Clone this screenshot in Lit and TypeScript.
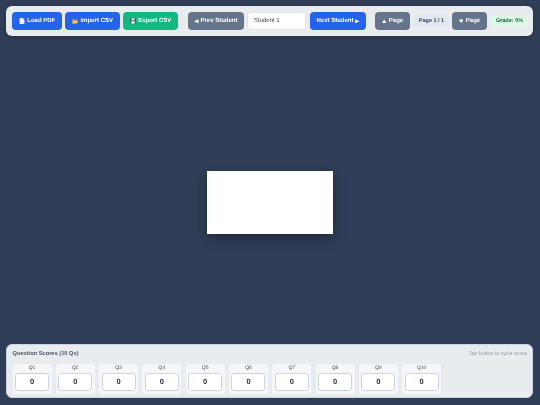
import { LitElement, html, css, svg } from "lit";
import { customElement } from "lit/decorators.js";

const pdfIcon = html`<svg class="ico" viewBox="0 0 10 10"><path d="M1 0h5l3 3v7H1z" fill="#f1f5f9"/><path d="M6 0v3h3z" fill="#cbd5e1"/></svg>`;
const folderIcon = html`<svg class="ico" viewBox="0 0 10 10"><path d="M0 1.500h3.500l1 1h4v2H0z" fill="#b98a35"/><path d="M0 9l1.500-5h8.500l-1.500 5z" fill="#f6c560"/></svg>`;
const saveIcon = html`<svg class="ico" viewBox="0 0 10 10"><path d="M.5.500h8l1 1v8h-9z" fill="#3f4a57"/><path d="M2.500.500h5v3.500h-5z" fill="#e5e7eb"/><path d="M2 5.500h6v4H2z" fill="#f8fafc"/></svg>`;
const tri = (d: string) => html`<svg class="tri" viewBox="0 0 10 10">${svg`<path d=${d} fill="#fff"/>`}</svg>`;
const LEFT = "M0 5 10 .5v9z";
const RIGHT = "M10 5 0 .5v9z";
const UP = "M5 1 10 9H0z";
const DOWN = "M5 9 10 1H0z";

@customElement("app-root")
export class AppRoot extends LitElement {
  static styles = css`
    :host {
      display: flex;
      flex-direction: column;
      width: 540px;
      height: 405px;
      box-sizing: border-box;
      padding: 6px 7px 7px 6px;
      background: #2f3e56;
      font-family: "Liberation Sans", Arial, sans-serif;
      text-rendering: geometricPrecision;
      color: #1f2937;
      overflow: hidden;
      filter: blur(0.4px);
    }
    .toolbar {
      display: flex;
      align-items: center;
      height: 30px;
      box-sizing: border-box;
      padding: 0 5px 0 6px;
      background: #e9ecef;
      border-radius: 6px;
      box-shadow: 0 1px 4px rgba(0, 0, 0, 0.25);
    }
    .btn {
      display: flex;
      align-items: center;
      justify-content: center;
      gap: 2.500px;
      height: 18px;
      box-sizing: border-box;
      border-radius: 4px;
      color: #fff;
      font-size: 6px;
      font-weight: 700;
      white-space: nowrap;
    }
    .blue { background: #2563eb; }
    .green { background: #10b981; }
    .gray { background: #64748b; }
    .w50 { width: 50px; }
    .w55 { width: 55px; margin-left: 3px; }
    .prev { width: 56px; margin-left: 10px; gap: 1.500px; }
    .next { width: 56px; margin-left: 1px; gap: 1.500px; }
    .up { width: 35px; margin-left: 9px; }
    .down { width: 35px; }
    .ico { width: 6px; height: 6px; flex: none; }
    .tri { width: 4.500px; height: 4.500px; flex: none; }
    .input {
      display: flex;
      align-items: center;
      width: 59px;
      height: 18px;
      box-sizing: border-box;
      padding-left: 6px;
      margin: 0 3px;
      background: #fff;
      border: 0.5px solid #dfe3e8;
      border-radius: 4px;
      font-size: 6px;
      color: #374151;
    }
    .page-label {
      display: flex;
      align-items: center;
      justify-content: center;
      width: 35px;
      height: 12px;
      margin: 0 3px 0 4px;
      background: #e2e8f0;
      border-radius: 3px;
      font-size: 5.500px;
      font-weight: 700;
      color: #334155;
    }
    .grade {
      display: flex;
      align-items: center;
      justify-content: center;
      width: 37px;
      height: 10px;
      margin-left: 4px;
      background: #dcfce7;
      border-radius: 3px;
      font-size: 5.500px;
      font-weight: 700;
      color: #166534;
    }
    .stage {
      flex: 1;
      display: flex;
      align-items: center;
      justify-content: center;
      padding: 25px 0 0 1px;
    }
    .sheet {
      width: 126px;
      height: 63px;
      background: #fff;
      box-shadow: 0 4px 12px rgba(0, 0, 0, 0.35);
    }
    .scores {
      height: 54px;
      box-sizing: border-box;
      padding: 5px 5px 5px 5.500px;
      background: #e9ecef;
      border: 0.5px solid #cbd5e1;
      border-radius: 6px;
    }
    .head {
      display: flex;
      justify-content: space-between;
      align-items: center;
      height: 7px;
      margin-bottom: 6.500px;
    }
    .title { font-size: 5.700px; font-weight: 700; color: #475569; }
    .hint { font-size: 5.250px; color: #8a94a6; }
    .grid { display: flex; gap: 4.300px; }
    .card {
      display: flex;
      flex-direction: column;
      align-items: center;
      width: 39px;
      height: 30px;
      box-sizing: border-box;
      padding-top: 1.500px;
      background: #f4f6f9;
      border-radius: 3px;
    }
    .q { font-size: 5px; line-height: 6px; color: #475569; }
    .val {
      display: flex;
      align-items: center;
      justify-content: center;
      width: 34px;
      height: 18.500px;
      margin-top: 1.500px;
      box-sizing: border-box;
      background: #fff;
      border: 0.75px solid #cbd5e1;
      border-radius: 2.500px;
      font-size: 7.500px;
      font-weight: 700;
      color: #1f2937;
    }
  `;

  render() {
    const qs = Array.from({ length: 10 }, (_, i) => `Q${i + 1}`);
    return html`
      <div class="toolbar">
        <div class="btn blue w50">${pdfIcon}Load PDF</div>
        <div class="btn blue w55">${folderIcon}Import CSV</div>
        <div class="btn green w55">${saveIcon}Export CSV</div>
        <div class="btn gray prev">${tri(LEFT)}Prev Student</div>
        <div class="input">Student 1</div>
        <div class="btn blue next">Next Student${tri(RIGHT)}</div>
        <div class="btn gray up">${tri(UP)}Page</div>
        <div class="page-label">Page 1 / 1</div>
        <div class="btn gray down">${tri(DOWN)}Page</div>
        <div class="grade">Grade: 0%</div>
      </div>
      <div class="stage"><div class="sheet"></div></div>
      <div class="scores">
        <div class="head">
          <span class="title">Question Scores (10 Qs)</span>
          <span class="hint">Tap button to cycle score</span>
        </div>
        <div class="grid">
          ${qs.map((q) => html`<div class="card"><span class="q">${q}</span><div class="val">0</div></div>`)}
        </div>
      </div>
    `;
  }
}
